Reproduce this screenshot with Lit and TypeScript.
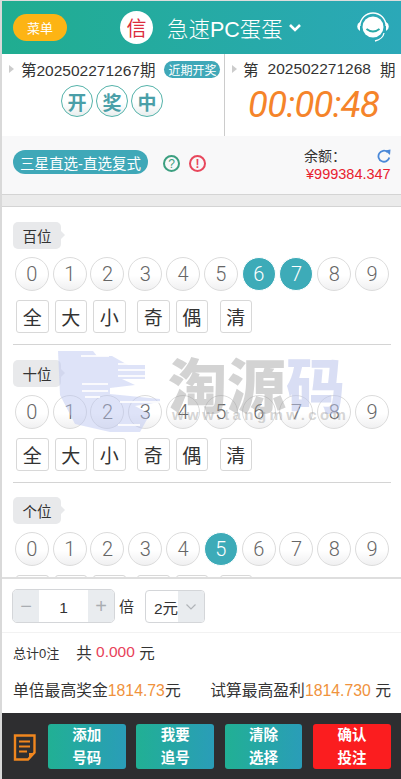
import { LitElement, html, css } from "lit";
import { customElement } from "lit/decorators.js";

@customElement("app-root")
export class AppRoot extends LitElement {
  static styles = css`
    :host { display: block; width: 401px; height: 779px; position: relative; overflow: hidden; font-family: "Liberation Sans", "Noto Sans CJK SC", sans-serif; color: #333; background: #fff; }
    .page { height: 779px; display: flex; flex-direction: column; border-left: 2px solid #d9d9d9; box-sizing: border-box; border-top: 1px solid #ddd; }
    .hdr { height: 53px; flex: none; display: flex; align-items: center; background: linear-gradient(90deg, #20ad90, #2ba8b8); color: #fff; padding-left: 11px; }
    .menu { width: 54px; height: 27px; border-radius: 14px; background: #fdb414; display: flex; align-items: center; justify-content: center; font-size: 13px; }
    .xin { width: 33px; height: 33px; border-radius: 50%; background: #fff; color: #dc2b3c; font-size: 20px; display: flex; align-items: center; justify-content: center; margin-left: 53px; }
    .title { font-size: 21.5px; margin-left: 14px; white-space: nowrap; font-weight: 300; }
    .chev { margin-left: 5px; }
    .hs { margin-left: auto; margin-right: 10px; margin-top: 1px; }
    .info { height: 82px; flex: none; display: flex; }
    .cell { position: relative; box-sizing: border-box; }
    .cell.l { width: 223px; border-right: 1px solid #ccc; }
    .cell.r { flex: 1; }
    .per { display: flex; align-items: center; height: 18px; margin-top: 6px; font-size: 15.5px; white-space: nowrap; color: #333; }
    .tri { width: 0; height: 0; border-left: 5px solid #ccc; border-top: 4px solid transparent; border-bottom: 4px solid transparent; margin: 0 7px; flex: none; }
    .r .tri { margin: 0 6px 0 7px; }
    .badge { background: #3fa8b8; color: #fff; font-size: 12px; height: 17px; padding: 0 4px; border-radius: 9px; display: flex; align-items: center; margin-left: 9px; }
    .prize { display: flex; gap: 3px; margin: 7px 0 0 59px; }
    .prize span { width: 32px; height: 32px; box-sizing: border-box; border-radius: 50%; border: 1px solid #55b3aa; background: linear-gradient(#fff 55%, #e9eeee); color: #4a9fa8; font-size: 19px; font-weight: 700; display: flex; align-items: center; justify-content: center; }
    .r .per span.gap { margin: 0 9px; }
    .timer { font-family: Roboto, "Liberation Sans", sans-serif; font-style: italic; font-weight: 400; color: #f5842a; font-size: 36.5px; line-height: 38px; margin: 8px 0 0 23px; letter-spacing: -0.7px; white-space: nowrap; }
    .mode { height: 58px; flex: none; background: #f8f8f9; display: flex; align-items: flex-start; padding-left: 11px; box-sizing: border-box; }
    .pill { margin-top: 14px; height: 24px; width: 135px; border-radius: 12px; background: #3fa8b8; color: #fff; font-size: 14.5px; display: flex; align-items: center; justify-content: center; white-space: nowrap; }
    .q, .x { margin-top: 19px; width: 13px; height: 13px; border-radius: 50%; border: 2px solid; font-size: 12px; display: flex; align-items: center; justify-content: center; flex: none; }
    .q { margin-left: 15px; color: #3c9f80; }
    .x { margin-left: 9px; color: #e8475c; font-weight: 700; }
    .bal { margin-left: auto; margin-right: 10px; width: 87px; margin-top: 11px; font-size: 14px; line-height: 18px; }
    .bal .t { display: flex; justify-content: space-between; align-items: center; color: #333; }
    .bal .m { color: #e8202f; white-space: nowrap; margin-left: 2px; font-size: 14.5px; }
    .strip { height: 13px; flex: none; box-sizing: border-box; background: #ebebeb; border-top: 1px solid #d4d4d4; border-bottom: 1px solid #d4d4d4; }
    .main { flex: 1; min-height: 0; overflow: hidden; padding: 15px 10px 0 11px; box-sizing: border-box; }
    .lab { position: relative; width: 48px; height: 27px; border-radius: 5px; background: #e8e9eb; font-size: 14.5px; display: flex; align-items: center; justify-content: center; color: #333; }
    .lab::after { content: ""; position: absolute; left: 48px; top: 9px; border-left: 4px solid #e8e9eb; border-top: 4px solid transparent; border-bottom: 4px solid transparent; }
    .balls { display: grid; grid-template-columns: repeat(10, 37.8px); margin-top: 8px; }
    .ball { width: 34px; height: 34px; box-sizing: border-box; border-radius: 50%; border: 1px solid #dcdcdc; background: linear-gradient(#fff 55%, #f0f0f1); color: #666; font-family: Roboto, "Liberation Sans", sans-serif; font-weight: 300; font-size: 20px; display: flex; align-items: center; justify-content: center; justify-self: center; }
    .ball.on { background: #3dabb8; border-color: #fff; color: #fff; }
    .ops { display: flex; margin: 9px 0 0 3px; }
    .op { width: 32.5px; height: 33px; box-sizing: border-box; border: 1px solid #d8d8d8; border-radius: 3px; background: #fff; font-size: 19px; color: #333; display: flex; align-items: center; justify-content: center; margin-right: 6px; }
    .op.sep { margin-right: 11.5px; }
    .hr { height: 1px; background: #d4d4d4; margin: 11px 0 14.5px; width: 378px; }
    .bottom { height: 136px; flex: none; box-sizing: border-box; border-top: 2px solid #dedede; background: #fff; position: relative; }
    .amt { height: 54px; display: flex; align-items: flex-start; padding: 10px 0 0 10px; box-sizing: border-box; border-bottom: 1px solid #f2f2f2; }
    .spin { width: 103px; height: 34px; box-sizing: border-box; border: 1px solid #d4d6d9; border-radius: 5px; display: flex; overflow: hidden; }
    .spin b { width: 26px; background: #e9ecef; color: #a9adb2; font-weight: 400; font-size: 20px; display: flex; align-items: center; justify-content: center; }
    .spin span { flex: 1; font-size: 15.5px; display: flex; align-items: center; justify-content: center; padding-top: 3px; box-sizing: border-box; color: #333; }
    .bei { font-size: 15px; margin: 6px 0 0 4px; }
    .sel { width: 60px; height: 33px; box-sizing: border-box; border: 1px solid #d4d6d9; border-radius: 4px; margin: 1px 0 0 11px; display: flex; overflow: hidden; }
    .sel span { width: 32px; font-size: 15.5px; display: flex; align-items: center; justify-content: flex-end; white-space: nowrap; color: #333; }
    .sel i { flex: 1; background: #e9ecef; display: flex; align-items: center; justify-content: center; }
    .tot { display: flex; align-items: center; height: 18px; margin: 10px 0 0 11px; font-size: 15.5px; white-space: nowrap; }
    .tot small { font-size: 13px; margin-right: 17px; }
    .red { color: #e8425a; }
    .or { color: #f0923c; }
    .prof { display: flex; height: 18px; align-items: center; margin: 19px 10px 0 11px; font-size: 15.8px; white-space: nowrap; justify-content: space-between; }
    .foot { height: 66px; flex: none; background: #2e2e30; display: flex; align-items: flex-start; padding: 11px 10px 0 11px; box-sizing: border-box; }
    .doc { width: 24px; margin: 10px 11px 0 0; flex: none; }
    .fb { width: 77.5px; height: 45px; border-radius: 3px; background: linear-gradient(90deg, #21b094, #2a9db8); color: #fff; font-size: 14.5px; font-weight: 700; line-height: 22.5px; text-align: center; flex: none; margin-right: 10.9px; }
    .fb:last-child { background: #fb1d1f; margin-right: 0; }
    .wm { position: absolute; left: 0; top: 0; pointer-events: none; }
    .wm-t { position: absolute; left: 168px; top: 345px; font-family: "Noto Sans CJK SC", sans-serif; font-weight: 900; font-size: 59px; line-height: 76px; color: rgba(150,150,150,.42); white-space: nowrap; pointer-events: none; }
    .wm-t em { font-style: normal; color: rgba(185,195,235,.55); }
    .wm-u { position: absolute; left: 172px; top: 406px; font-size: 15px; font-weight: 700; letter-spacing: 3.4px; color: rgba(150,150,150,.4); white-space: nowrap; pointer-events: none; }
  `;

  private group(label: string, on: number[]) {
    const digits = [0, 1, 2, 3, 4, 5, 6, 7, 8, 9];
    return html`
      <div class="lab">${label}</div>
      <div class="balls">${digits.map((d) => html`<div class="ball ${on.includes(d) ? "on" : ""}">${d}</div>`)}</div>
      <div class="ops">
        <div class="op">全</div><div class="op">大</div><div class="op sep">小</div>
        <div class="op">奇</div><div class="op sep">偶</div><div class="op">清</div>
      </div>
    `;
  }

  render() {
    return html`
      <div class="page">
        <div class="hdr">
          <div class="menu">菜单</div>
          <div class="xin">信</div>
          <div class="title">急速PC蛋蛋</div>
          <svg class="chev" width="14" height="10" viewBox="0 0 14 10"><path d="M2 2l5 5 5-5" fill="none" stroke="#fff" stroke-width="2.6"/></svg>
          <svg class="hs" width="36" height="32" viewBox="0 0 36 32">
            <path d="M5 14a13 13 0 0 1 26 0" fill="none" stroke="#fff" stroke-width="1.3"/>
            <path d="M5 10a5 5 0 0 0 0 9zM31 10a5 5 0 0 1 0 9z" fill="#fff"/>
            <circle cx="18" cy="15" r="10.5" fill="#fff"/>
            <path d="M11.5 17q6.5 5 13 0" fill="none" stroke="#2aa9a6" stroke-width="2"/>
            <path d="M29 21q-1 6-9 8" fill="none" stroke="#fff" stroke-width="1.3"/>
          </svg>
        </div>
        <div class="info">
          <div class="cell l">
            <div class="per"><i class="tri"></i>第202502271267期<span class="badge">近期开奖</span></div>
            <div class="prize"><span>开</span><span>奖</span><span>中</span></div>
          </div>
          <div class="cell r">
            <div class="per"><i class="tri"></i>第<span class="gap">202502271268</span>期</div>
            <div class="timer">00:00:48</div>
          </div>
        </div>
        <div class="mode">
          <div class="pill">三星直选-直选复式</div>
          <div class="q">?</div>
          <div class="x">!</div>
          <div class="bal">
            <div class="t"><span>余额：</span>
              <svg width="14" height="14" viewBox="0 0 14 14"><path d="M12.3 8.5A5.5 5.5 0 1 1 10.5 3" fill="none" stroke="#4a88d8" stroke-width="1.8"/><path d="M8 1.5L13.5 0.5 13 6z" fill="#4a88d8"/></svg>
            </div>
            <div class="m">¥999384.347</div>
          </div>
        </div>
        <div class="strip"></div>
        <div class="main">
          ${this.group("百位", [6, 7])}
          <div class="hr"></div>
          ${this.group("十位", [])}
          <div class="hr"></div>
          ${this.group("个位", [5])}
        </div>
        <div class="bottom">
          <div class="amt">
            <div class="spin"><b>−</b><span>1</span><b>+</b></div>
            <div class="bei">倍</div>
            <div class="sel"><span>2元</span><i><svg width="12" height="8" viewBox="0 0 12 8"><path d="M1.5 1.5L6 6l4.5-4.5" fill="none" stroke="#b0b4b8" stroke-width="1.2"/></svg></i></div>
          </div>
          <div class="tot"><small>总计0注</small>共&nbsp;<span class="red">0.000</span>&nbsp;元</div>
          <div class="prof">
            <span>单倍最高奖金<span class="or">1814.73</span>元</span>
            <span>试算最高盈利<span class="or">1814.730</span> 元</span>
          </div>
        </div>
        <div class="foot">
          <svg class="doc" width="24" height="27" viewBox="0 0 24 27">
            <path d="M2 1.5h19.5v17l-6.5 7H2z" fill="none" stroke="#f0861e" stroke-width="2.4"/>
            <path d="M6 7.5h11M6 12.5h11M6 17.5h8" stroke="#f0861e" stroke-width="2"/>
            <path d="M16 25l0-6h6z" fill="#f0861e"/>
          </svg>
          <div class="fb">添加<br />号码</div>
          <div class="fb">我要<br />追号</div>
          <div class="fb">清除<br />选择</div>
          <div class="fb">确认<br />投注</div>
        </div>
      </div>
      <svg class="wm" width="401" height="779" viewBox="0 0 401 779">
        <path d="M58 351H93L97 356H112L128 365H145V379H122L135 385L110 388V394L160 399V402L135 406 L150 414 L140 432 H110 L75 424 L60 395Z" fill="rgba(186,197,240,.48)"/>
        <path d="M81 356H109M118 364H145M118 370H145M118 376H145M82 384H108M82 391H108M85 397H100M120 402H160M118 425H140" stroke="#fff" stroke-width="2" opacity=".85"/>
      </svg>
      <div class="wm-t">淘源<em>码</em></div>
      <div class="wm-u">www.tangmw.com</div>
    `;
  }
}
